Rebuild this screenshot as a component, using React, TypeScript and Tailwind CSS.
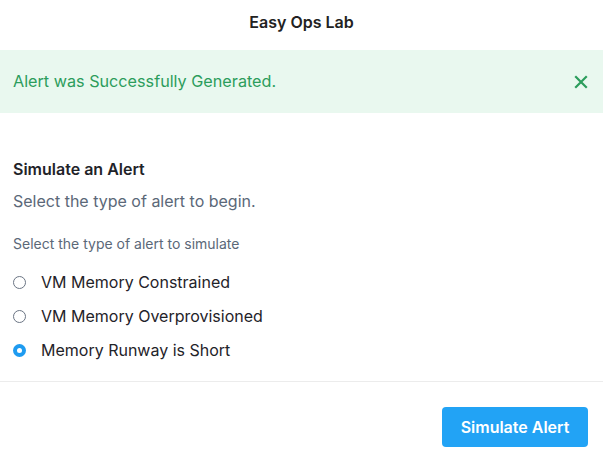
import React from "react";

function Radio({ checked }: { checked?: boolean }) {
  return checked ? (
    <span className="flex h-[13px] w-[13px] items-center justify-center rounded-full bg-[#1e9bf0]">
      <span className="h-[5px] w-[5px] rounded-full bg-white" />
    </span>
  ) : (
    <span className="h-[13px] w-[13px] rounded-full border-[1.5px] border-[#6b7584] bg-white" />
  );
}

export default function App() {
  const options = [
    { label: "VM Memory Constrained", checked: false },
    { label: "VM Memory Overprovisioned", checked: false },
    { label: "Memory Runway is Short", checked: true },
  ];
  return (
    <div className="flex h-[457px] w-[603px] flex-col bg-white font-['Inter',sans-serif] text-[#1f2329]">
      <div className="flex h-[50px] items-center justify-center pb-[6px] text-[16px] font-semibold text-[#222]">
        Easy Ops Lab
      </div>
      <div className="flex h-[63px] items-center justify-between bg-[#e9f8ef] pl-[13px] pr-[15px] text-[16.2px] text-[#2c9d5c]">
        <span>Alert was Successfully Generated.</span>
        <svg width="14" height="14" viewBox="0 0 14 14" fill="none" stroke="#2c9d5c" strokeWidth="2.2" strokeLinecap="square">
          <path d="M2 2L12 12M12 2L2 12" />
        </svg>
      </div>
      <div className="flex flex-1 flex-col px-[13px] pt-[46px]">
        <div className="text-[16px] leading-[20px] font-semibold text-[#1f2329]">Simulate an Alert</div>
        <div className="mt-[12px] text-[16px] leading-[20px] text-[#5b6878]">Select the type of alert to begin.</div>
        <div className="mt-[24px] text-[14px] leading-[18px] text-[#5b6878]">Select the type of alert to simulate</div>
        <div className="mt-[20px] flex flex-col gap-[16px]">
          {options.map((o) => (
            <label key={o.label} className="flex h-[18px] items-center gap-[15px] text-[16px] text-[#1f2329]">
              <Radio checked={o.checked} />
              <span>{o.label}</span>
            </label>
          ))}
        </div>
      </div>
      <div className="flex h-[76px] items-start justify-end border-t border-[#ececec] pr-[15px] pt-[25px]">
        <button className="h-[40px] w-[146px] rounded-[4px] bg-[#22a3f5] text-[16px] font-semibold text-white">
          Simulate Alert
        </button>
      </div>
    </div>
  );
}
